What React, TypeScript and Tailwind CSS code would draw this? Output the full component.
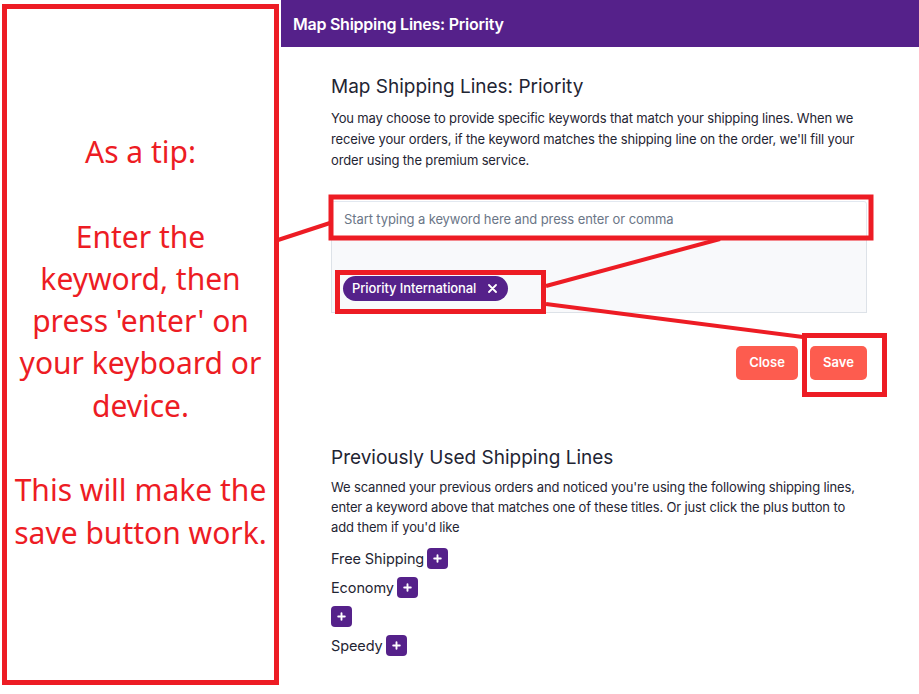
import React from "react";

const ui = { fontFamily: "Inter, 'Noto Sans', sans-serif" };
const note = { fontFamily: "'Noto Sans', 'Open Sans', sans-serif" };

function Plus() {
  return (
    <span className="inline-flex h-[21px] w-[21px] items-center justify-center rounded-[4px] bg-[#55218a]">
      <svg width="9" height="9" viewBox="0 0 9 9">
        <path d="M4.5 1.2v6.6M1.2 4.5h6.6" stroke="white" strokeWidth="1.9" strokeLinecap="round" />
      </svg>
    </span>
  );
}

export default function App() {
  const lines = ["Free Shipping", "Economy", "", "Speedy"];
  return (
    <div className="relative flex h-[694px] w-[919px] overflow-hidden bg-white" style={ui}>
      <div className="w-[281px] shrink-0">
        <div
          className="ml-[2px] mt-[4px] flex h-[681px] w-[277px] flex-col items-center border-[5px] border-[#ed1c24] pt-[122px] text-center text-[30px] leading-[42.3px] text-[#ed1c24]"
          style={note}
        >
          <div>As a tip:</div>
          <div>&nbsp;</div>
          <div>Enter the</div>
          <div>keyword, then</div>
          <div>press 'enter' on</div>
          <div>your keyboard or</div>
          <div>device.</div>
          <div>&nbsp;</div>
          <div className="whitespace-nowrap">This will make the</div>
          <div className="whitespace-nowrap">save button work.</div>
        </div>
      </div>

      <div className="flex flex-1 flex-col">
        <div className="flex h-[47px] items-center bg-[#55218a] pl-[12px] text-[16px] font-semibold tracking-[-0.25px] text-white">
          Map Shipping Lines: Priority
        </div>
        <div className="flex flex-col pl-[50px] pr-[50px] pt-[28px] text-[#1f2533]">
          <h2 className="text-[19px] leading-[24px]">Map Shipping Lines: Priority</h2>
          <p className="mt-[9px] text-[13px] leading-[21px] tracking-[-0.15px]">
            You may choose to provide specific keywords that match your shipping lines. When we receive your orders, if the keyword matches the shipping line on the order, we'll fill your order using the premium service.
          </p>
          <div className="mt-[30px] flex flex-col pr-[2px]">
            <div className="flex h-[38px] items-center rounded-t-[3px] border border-[#e2e8f0] bg-white px-[12px] text-[13px] tracking-[-0.1px] text-[#6b7687]">
              Start typing a keyword here and press enter or comma
            </div>
            <div className="flex h-[74px] items-end border border-t-0 border-[#dde2e8] bg-[#f8f9fb] px-[11px] pb-[11px]">
              <div className="flex h-[25px] items-center gap-[12px] rounded-full bg-[#55218a] pl-[9px] pr-[11px] text-[13px] font-medium tracking-[-0.1px] text-white">
                <span>Priority International</span>
                <svg width="9" height="9" viewBox="0 0 9 9">
                  <path d="M1 1l7 7M8 1L1 8" stroke="white" strokeWidth="1.8" strokeLinecap="round" />
                </svg>
              </div>
            </div>
          </div>
          <div className="mt-[33px] flex justify-end gap-[12px] pr-[2px]">
            <button className="h-[34px] w-[62px] rounded-[5px] bg-[#fd5c4f] text-[13px] font-semibold text-white">Close</button>
            <button className="h-[34px] w-[57px] rounded-[5px] bg-[#fd5c4f] text-[13px] font-semibold text-white">Save</button>
          </div>
          <h2 className="mt-[66px] text-[19px] leading-[24px]">Previously Used Shipping Lines</h2>
          <p className="mt-[7px] text-[13px] leading-[20px] tracking-[-0.15px]">
            We scanned your previous orders and noticed you're using the following shipping lines, enter a keyword above that matches one of these titles. Or just click the plus button to add them if you'd like
          </p>
          <div className="mt-[11px] flex flex-col gap-[8px]">
            {lines.map((l, i) => (
              <div key={i} className="flex h-[21px] items-center gap-[3px] text-[14.5px] tracking-[-0.1px]">
                {l && <span>{l}</span>}
                <Plus />
              </div>
            ))}
          </div>
        </div>
      </div>

      <svg className="pointer-events-none absolute inset-0" width="919" height="694">
        <g fill="none" stroke="#ed1c24">
          <rect x="331" y="197" width="540" height="41" strokeWidth="5" />
          <rect x="337.5" y="272.5" width="206" height="39" strokeWidth="5" />
          <rect x="804.5" y="335.5" width="80" height="59" strokeWidth="5" />
          <line x1="278" y1="240" x2="330" y2="223" strokeWidth="4" />
          <line x1="546" y1="286" x2="720" y2="239" strokeWidth="4" />
          <line x1="546" y1="304" x2="803" y2="337" strokeWidth="4" />
        </g>
      </svg>
    </div>
  );
}
